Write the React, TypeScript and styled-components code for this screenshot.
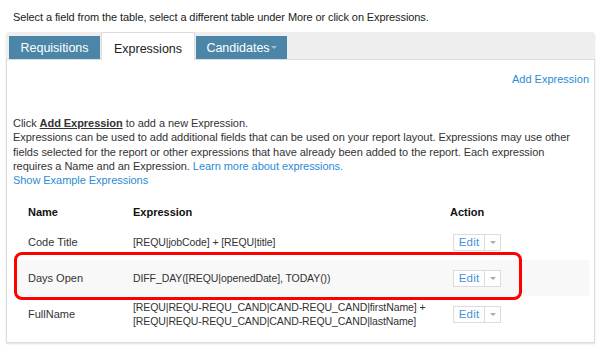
import React from "react";
import styled, { createGlobalStyle } from "styled-components";

const Global = createGlobalStyle`
  html, body { margin: 0; padding: 0; background: #fff; }
  body { font-family: "Liberation Sans", Arial, sans-serif; color: #333; }
`;

const Page = styled.div`
  width: 609px;
  height: 361px;
  padding: 10px 0 0 6px;
  box-sizing: border-box;
`;

const Intro = styled.p`
  margin: 0 0 8px 7px;
  font-size: 11px;
  letter-spacing: -0.1px;
  line-height: 14px;
  color: #222;
`;

const Panel = styled.div`
  width: 589px;
  background: #eeeeee;
  border-radius: 4px 4px 0 0;
  box-shadow: 0 1px 2px rgba(0, 0, 0, 0.12);
`;

const TabBar = styled.div`
  display: flex;
  align-items: flex-end;
  height: 27px;
  padding: 0 0 0 3px;
`;

const Tab = styled.div<{ $active?: boolean }>`
  display: flex;
  align-items: center;
  justify-content: center;
  box-sizing: border-box;
  font-size: 12.5px;
  margin-right: 1px;
  width: ${(p) => (p.$active ? "94px" : "91px")};
  height: ${(p) => (p.$active ? "28px" : "23px")};
  background: ${(p) => (p.$active ? "#fff" : "#4b86a8")};
  color: ${(p) => (p.$active ? "#222" : "#fff")};
  border: ${(p) => (p.$active ? "1px solid #dcdcdc" : "none")};
  border-bottom: none;
  margin-bottom: ${(p) => (p.$active ? "-1px" : "0")};
  padding-top: ${(p) => (p.$active ? "4px" : "0")};
`;

const Caret = styled.span`
  display: inline-block;
  width: 0;
  height: 0;
  margin-left: 1px;
  border-left: 3px solid transparent;
  border-right: 3px solid transparent;
  border-top: 3px solid #9fc0d3;
  vertical-align: middle;
`;

const Content = styled.div`
  background: #fff;
  border: 1px solid #dcdcdc;
  height: 284px;
  box-sizing: border-box;
  padding: 12px 5px 0 6px;
`;

const TopLinkRow = styled.div`
  display: flex;
  justify-content: flex-end;
  font-size: 11px;
  line-height: 14px;
`;

const Link = styled.a`
  color: #2b8bd4;
  text-decoration: none;
  cursor: pointer;
`;

const Help = styled.div`
  margin-top: 30px;
  font-size: 11px;
  letter-spacing: -0.05px;
  line-height: 14.3px;
  color: #333;
`;

const Strong = styled.span`
  font-weight: bold;
  text-decoration: underline;
`;

const TableWrap = styled.div`
  position: relative;
  margin-top: 7px;
  margin-left: 1px;
`;

const Table = styled.table`
  width: 575px;
  table-layout: fixed;
  border-collapse: collapse;
  font-size: 11px;
  color: #333;
`;

const Col = styled.col<{ $w: number }>`
  width: ${(p) => p.$w}px;
`;

const Th = styled.th`
  box-sizing: border-box;
  text-align: left;
  font-size: 11px;
  font-weight: bold;
  color: #111;
  padding: 0 0 5px 14px;
  height: 30px;
  line-height: 14px;
  vertical-align: bottom;
`;

const Tr = styled.tr<{ $shade?: boolean }>`
  background: ${(p) => (p.$shade ? "#f8f8f8" : "transparent")};
`;

const Td = styled.td<{ $code?: boolean }>`
  box-sizing: border-box;
  padding: 0 0 0 14px;
  height: 36px;
  line-height: 14px;
  vertical-align: middle;
  white-space: nowrap;
  font-size: ${(p) => (p.$code ? "10.5px" : "11px")};
  letter-spacing: ${(p) => (p.$code ? "-0.1px" : "0")};
`;

const SplitButton = styled.div`
  display: inline-flex;
  vertical-align: middle;
  height: 17px;
  border: 1px solid #dcdcdc;
  box-sizing: border-box;
  background: #fff;
  margin-left: 3px;
`;

const EditPart = styled.span`
  display: flex;
  align-items: center;
  justify-content: center;
  width: 30px;
  color: #4a90d9;
  font-size: 11.5px;
  letter-spacing: 0.2px;
  border-right: 1px solid #dcdcdc;
`;

const ArrowPart = styled.span`
  display: flex;
  align-items: center;
  justify-content: center;
  width: 15px;
`;

const SmallCaret = styled.span`
  width: 0;
  height: 0;
  border-left: 3px solid transparent;
  border-right: 3px solid transparent;
  border-top: 3px solid #aaa;
`;

const Highlight = styled.div`
  position: absolute;
  left: 0;
  top: 58px;
  width: 508px;
  height: 48px;
  border: 3px solid #ff0000;
  border-radius: 8px;
  box-sizing: border-box;
  pointer-events: none;
`;

const Edit = () => (
  <SplitButton>
    <EditPart>Edit</EditPart>
    <ArrowPart>
      <SmallCaret />
    </ArrowPart>
  </SplitButton>
);

export default function App() {
  return (
    <>
      <Global />
      <Page>
        <Intro>Select a field from the table, select a different table under More or click on Expressions.</Intro>
        <Panel>
          <TabBar>
            <Tab>Requisitions</Tab>
            <Tab $active>Expressions</Tab>
            <Tab>
              Candidates
              <Caret />
            </Tab>
          </TabBar>
          <Content>
            <TopLinkRow>
              <Link>Add Expression</Link>
            </TopLinkRow>
            <Help>
              Click <Strong>Add Expression</Strong> to add a new Expression.
              <br />
              Expressions can be used to add additional fields that can be used on your report layout. Expressions may use other
              <br />
              fields selected for the report or other expressions that have already been added to the report. Each expression
              <br />
              requires a Name and an Expression. <Link>Learn more about expressions.</Link>
              <br />
              <Link>Show Example Expressions</Link>
            </Help>
            <TableWrap>
              <Table>
                <colgroup>
                  <Col $w={105} />
                  <Col $w={317} />
                  <Col $w={153} />
                </colgroup>
                <thead>
                  <tr>
                    <Th>Name</Th>
                    <Th>Expression</Th>
                    <Th>Action</Th>
                  </tr>
                </thead>
                <tbody>
                  <Tr>
                    <Td>Code Title</Td>
                    <Td $code>[REQU|jobCode] + [REQU|title]</Td>
                    <Td>
                      <Edit />
                    </Td>
                  </Tr>
                  <Tr $shade>
                    <Td>Days Open</Td>
                    <Td $code>DIFF_DAY([REQU|openedDate], TODAY())</Td>
                    <Td>
                      <Edit />
                    </Td>
                  </Tr>
                  <Tr>
                    <Td>FullName</Td>
                    <Td $code>
                      [REQU|REQU-REQU_CAND|CAND-REQU_CAND|firstName] +
                      <br />
                      [REQU|REQU-REQU_CAND|CAND-REQU_CAND|lastName]
                    </Td>
                    <Td>
                      <Edit />
                    </Td>
                  </Tr>
                </tbody>
              </Table>
              <Highlight />
            </TableWrap>
          </Content>
        </Panel>
      </Page>
    </>
  );
}
